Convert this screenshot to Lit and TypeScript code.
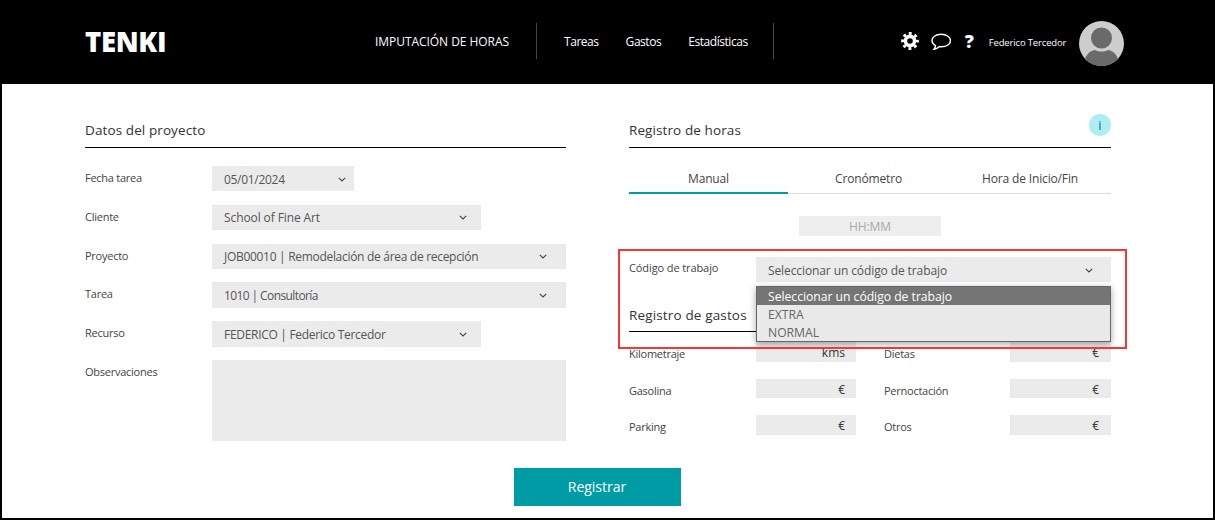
import { LitElement, html, css } from 'lit';
import { customElement } from 'lit/decorators.js';

const chevron = html`<svg class="chev" width="8" height="5" viewBox="0 0 8 5"><path d="M.8.8L4 4l3.2-3.2" fill="none" stroke="#444" stroke-width="1.1"/></svg>`;

const projectRows = [
  { label: 'Fecha tarea', value: '05/01/2024', size: 'small', fit: 'fit-a' },
  { label: 'Cliente', value: 'School of Fine Art', size: 'mid', fit: '' },
  { label: 'Proyecto', value: 'JOB00010 | Remodelación de área de recepción', size: 'full', fit: 'fit-a' },
  { label: 'Tarea', value: '1010 | Consultoría', size: 'full', fit: 'fit-b' },
  { label: 'Recurso', value: 'FEDERICO | Federico Tercedor', size: 'mid', fit: 'fit-a' },
];

const expenses = [
  ['Kilometraje', 'kms', 'Dietas', '€'],
  ['Gasolina', '€', 'Pernoctación', '€'],
  ['Parking', '€', 'Otros', '€'],
];

@customElement('app-root')
export class AppRoot extends LitElement {
  static styles = css`
    :host {
      display: block;
      box-sizing: border-box;
      width: 1215px;
      height: 520px;
      background: #fff;
      border-left: 2px solid #000;
      border-right: 2px solid #000;
      border-bottom: 2px solid #000;
      font-family: "Open Sans", "Noto Sans", sans-serif;
      color: #444;
      overflow: hidden;
    }
    header {
      height: 84px;
      margin: 0 -2px;
      background: #000;
      color: #fff;
      display: flex;
      align-items: center;
      padding-left: 85px;
    }
    .logo {
      width: 290px;
      font-size: 27.5px;
      font-weight: 800;
      letter-spacing: -0.3px;
      margin-top: -1px;
    }
    nav {
      display: flex;
      align-items: center;
      font-size: 12px;
      letter-spacing: -0.45px;
      margin-top: -2px;
    }
    .nav-main { width: 161px; letter-spacing: -0.05px; }
    .nav-sep { width: 1px; height: 36px; background: #444; }
    .nav-item { margin-left: 27px; }
    .nav-sep.last { margin-left: 25px; }
    .tools {
      margin-left: 127px;
      display: flex;
      align-items: center;
    }
    .gear { margin-bottom: 2px; }
    .bubble { margin-left: 12px; }
    .help { margin-left: 14px; margin-bottom: 3px; font-size: 18px; font-weight: 800; width: 10px; }
    .user { margin-left: 14px; width: 90px; font-size: 9.5px; letter-spacing: -0.15px; white-space: nowrap; }
    .avatar { margin-top: 2px; }
    .content {
      width: 1026px;
      margin-left: 83px;
      padding-top: 30px;
    }
    .cols {
      display: grid;
      grid-template-columns: 481px 482px;
      column-gap: 63px;
    }
    .title {
      height: 34px;
      box-sizing: border-box;
      border-bottom: 1px solid #000;
      display: flex;
      justify-content: space-between;
      font-size: 13.5px;
      letter-spacing: 0.1px;
      line-height: 32px;
      color: #333;
    }
    .gastos { margin-top: 16px; line-height: 34px; letter-spacing: 0.15px; }
    .info {
      width: 22px;
      height: 22px;
      border-radius: 50%;
      background: #aeeef2;
      color: #2b5fa8;
      font-size: 13px;
      line-height: 23px;
      text-align: center;
    }
    .form {
      margin-top: 18px;
      display: grid;
      grid-template-columns: 127px 354px;
      grid-auto-rows: 25.4px;
      row-gap: 13.4px;
    }
    .lbl {
      font-size: 11px;
      line-height: 23px;
      letter-spacing: -0.1px;
    }
    .form .lbl { letter-spacing: -0.25px; }
    .field {
      background: #ebebeb;
      display: flex;
      align-items: center;
      justify-content: space-between;
      box-sizing: border-box;
      padding-left: 12px;
      padding-top: 1px;
      font-size: 12px;
      letter-spacing: -0.1px;
      color: #555;
      white-space: nowrap;
    }
    .fit-a { letter-spacing: -0.3px; }
    .fit-b { letter-spacing: -0.6px; }
    .chev { flex: none; }
    .small { width: 142px; padding-right: 8px; }
    .mid { width: 269px; padding-right: 14px; }
    .full { width: 354px; padding-right: 19px; }
    .area { height: 81px; width: 354px; background: #ebebeb; }
    .tabs {
      height: 46px;
      display: grid;
      grid-template-columns: 159px 161px 162px;
      align-items: stretch;
      font-size: 12px;
      letter-spacing: -0.15px;
    }
    .tab {
      border-bottom: 1px solid #ddd;
      display: flex;
      justify-content: center;
      align-items: flex-end;
      padding-bottom: 6px;
    }
    .tab.on { border-bottom: 2px solid #009ca6; padding-bottom: 5px; }
    .time {
      width: 142px;
      height: 20px;
      margin: 22px auto 0;
      background: #eee;
      color: #aaa;
      font-size: 12px;
      line-height: 22px;
      letter-spacing: -0.1px;
      text-align: center;
    }
    .code {
      position: relative;
      margin-top: 21px;
      height: 25px;
      display: grid;
      grid-template-columns: 127px 355px;
    }
    .code .lbl { line-height: 22px; }
    .code .field { padding-right: 18px; }
    .menu {
      position: absolute;
      z-index: 2;
      left: 127px;
      top: 29px;
      width: 355px;
      height: 56px;
      box-sizing: border-box;
      border: 1px solid #666;
      background: #e9e9e9;
      box-shadow: 0 2px 7px rgba(0, 0, 0, 0.35);
      font-size: 12.2px;
      letter-spacing: -0.03px;
      color: #666;
    }
    .menu div { padding-left: 11px; height: 18px; line-height: 20px; }
    .menu .sel { background: #757575; color: #fff; }
    .mark {
      position: absolute;
      z-index: 3;
      left: -11px;
      top: -8px;
      width: 509px;
      height: 100px;
      box-sizing: border-box;
      border: 2px solid #f33636;
      pointer-events: none;
    }
    .costs {
      margin-top: 10px;
      display: grid;
      grid-template-columns: 127px 100px 28px 126px 101px;
      grid-template-rows: 20px 19px 20px;
      row-gap: 17px;
    }
    .costs .lbl { line-height: 24px; letter-spacing: -0.25px; }
    .amt {
      background: #ebebeb;
      color: #333;
      font-size: 12px;
      line-height: 22px;
      text-align: right;
      padding-right: 11px;
    }
    .amt.r { padding-right: 12px; }
    .foot { display: flex; justify-content: center; margin-top: 33px; padding-right: 2px; }
    .send {
      width: 167px;
      height: 38px;
      background: #009ca6;
      color: #fff;
      font-size: 14px;
      line-height: 38px;
      text-align: center;
    }
  `;

  render() {
    return html`
      <header>
        <div class="logo">TENKI</div>
        <nav>
          <span class="nav-main">IMPUTACIÓN DE HORAS</span>
          <span class="nav-sep"></span>
          <span class="nav-item">Tareas</span>
          <span class="nav-item">Gastos</span>
          <span class="nav-item">Estadísticas</span>
          <span class="nav-sep last"></span>
        </nav>
        <div class="tools">
          <svg class="gear" width="18" height="18" viewBox="0 0 18 18">
            <circle cx="9" cy="9" r="4.6" fill="none" stroke="#fff" stroke-width="3.6"/>
            <circle cx="9" cy="9" r="7.4" fill="none" stroke="#fff" stroke-width="3" stroke-dasharray="2.9 2.91" stroke-dashoffset="1.45"/>
          </svg>
          <svg class="bubble" width="20" height="18" viewBox="0 0 20 18">
            <path d="M10 1.2C5 1.2 1 3.9 1 7.5c0 2.2 1.4 4 3.5 5.1 0 1.5-.6 2.6-1.5 3.7 2-.3 3.9-1.2 5.1-2.7.8.2 1.6.2 2.4.2 5 0 9-2.8 9-6.3S15 1.2 10 1.2z" fill="none" stroke="#fff" stroke-width="1.4"/>
          </svg>
          <span class="help">?</span>
          <span class="user">Federico Tercedor</span>
          <svg class="avatar" width="45" height="45" viewBox="0 0 45 45">
            <defs><clipPath id="av"><circle cx="22.5" cy="22.5" r="22.5"/></clipPath></defs>
            <g clip-path="url(#av)">
              <rect width="45" height="45" fill="#cdcdcd"/>
              <circle cx="22.5" cy="17" r="10.5" fill="#6a6a6a"/>
              <path d="M5 45c0-10 5-15 11-16 4 2 9 2 13 0 6 1 11 6 11 16z" fill="#6a6a6a"/>
            </g>
          </svg>
        </div>
      </header>
      <div class="content">
        <div class="cols">
          <section>
            <div class="title">Datos del proyecto</div>
            <div class="form">
              ${projectRows.map(r => html`
                <div class="lbl">${r.label}</div>
                <div class="field ${r.size}"><span class="${r.fit}">${r.value}</span>${chevron}</div>
              `)}
              <div class="lbl">Observaciones</div>
              <div class="area"></div>
            </div>
          </section>
          <section>
            <div class="title">Registro de horas<span class="info">i</span></div>
            <div class="tabs">
              <div class="tab on">Manual</div>
              <div class="tab">Cronómetro</div>
              <div class="tab">Hora de Inicio/Fin</div>
            </div>
            <div class="time">HH:MM</div>
            <div class="code">
              <div class="lbl">Código de trabajo</div>
              <div class="field"><span>Seleccionar un código de trabajo</span>${chevron}</div>
              <div class="menu">
                <div class="sel">Seleccionar un código de trabajo</div>
                <div>EXTRA</div>
                <div>NORMAL</div>
              </div>
              <div class="mark"></div>
            </div>
            <div class="title gastos">Registro de gastos</div>
            <div class="costs">
              ${expenses.map(e => html`
                <div class="lbl">${e[0]}</div>
                <div class="amt">${e[1]}</div>
                <div></div>
                <div class="lbl">${e[2]}</div>
                <div class="amt r">${e[3]}</div>
              `)}
            </div>
          </section>
        </div>
        <div class="foot"><div class="send">Registrar</div></div>
      </div>
    `;
  }
}
